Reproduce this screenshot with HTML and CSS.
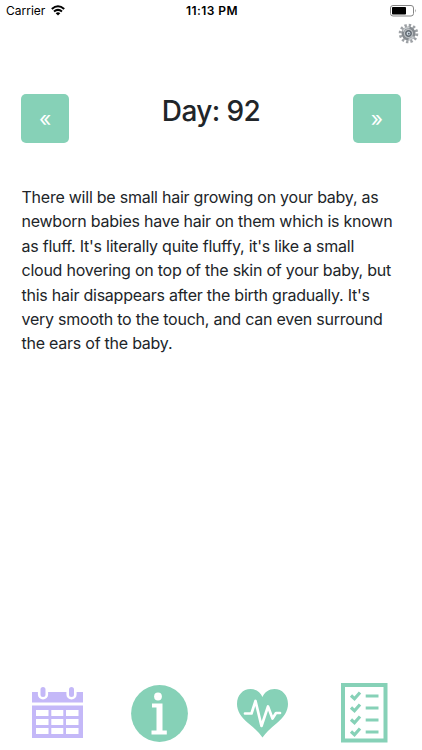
FILE: index.html
```html
<!DOCTYPE html>
<html lang="en">
<head>
<meta charset="utf-8">
<title>Day 92</title>
<link rel="stylesheet" href="styles.css">
</head>
<body>
<header class="status">
  <div class="carrier"><span>Carrier</span>
    <svg class="wifi" viewBox="0 0 14 11"><g fill="none" stroke="#000" stroke-width="2"><path d="M.8 4.1Q7-1.5 13.2 4.1M3 6.6Q7 3.1 11 6.6"/></g><path d="M4.7 8.2Q7 6.3 9.3 8.2L7 10.6z"/></svg>
  </div>
  <div class="time">11:13 PM</div>
  <svg class="battery" viewBox="0 0 26 12"><rect x=".5" y=".5" width="23" height="10.5" rx="2.5" fill="#fff" stroke="#858585"/><rect x="2" y="2" width="14" height="7.5" rx=".8"/><path d="M25 4q1.5 1.8 0 3.6z" fill="#858585"/></svg>
</header>
<div class="settings">
  <svg class="gear" viewBox="-10.5 -10.5 21 21">
    <circle r="8.300" fill="none" stroke="#9da1a5" stroke-width="3" stroke-dasharray="2.350 1.996"/>
    <circle r="5.800" fill="#bfc3c6" stroke="#868b90" stroke-width="2.400"/>
    <path d="M-5.500 -2A5.800 5.800 0 0 1 1-5.700M5 3A5.800 5.800 0 0 1 0 5.800" fill="none" stroke="#c9cdd0" stroke-width="1.500"/>
    <circle r="2.700" fill="#cbd5de" stroke="#626a72" stroke-width="1.500"/>
    <circle cx=".3" cy=".2" r=".9" fill="#59636c"/>
  </svg>
</div>
<main>
  <div class="day-nav">
    <button class="step">«</button>
    <h1>Day: 92</h1>
    <button class="step">»</button>
  </div>
  <p class="story">There will be small hair growing on your baby, as<br>newborn babies have hair on them which is known<br>as fluff. It's literally quite fluffy, it's like a small<br>cloud hovering on top of the skin of your baby, but<br>this hair disappears after the birth gradually. It's<br>very smooth to the touch, and can even surround<br>the ears of the baby.</p>
</main>
<nav class="tabs">
  <svg class="calendar" viewBox="0 0 51 51">
    <path fill="#c4b8f8" d="M0 5H51V15.500H0zM0 18.500H51V51H0z"/>
    <g fill="#c4b8f8" stroke="#fff" stroke-width="2.600"><rect x="7.200" y="-1.300" width="7.600" height="12.600" rx="3.800"/><rect x="35.700" y="-1.300" width="7.600" height="12.600" rx="3.800"/></g>
    <path fill="#fff" d="M4 23h12.500v6H4zM19.300 23h12v6h-12zM34 23h12.500v6H34zM4 32h12.500v6H4zM19.300 32h12v6h-12zM34 32h12.500v6H34zM4 41h12.500v6H4zM19.300 41h12v6h-12zM34 41h12.500v6H34z"/>
  </svg>
  <svg class="info" viewBox="0 0 57 57"><circle cx="28.500" cy="28.500" r="28.400" fill="#86d1b7"/><circle cx="27" cy="11.500" r="3.900" fill="#fff"/><path fill="#fff" d="M21 18.500H31.500V45.500H35.800V49.500H20.500V45.500H25.500V22.500H21z"/></svg>
  <svg class="heart" viewBox="0 0 51 49"><path fill="#86d1b7" d="M25.500 48.500Q21 42 11 34C4 28 0 22 0 15C0 6 6 0 13.500 0C19 0 23.500 3 25.500 8C27.500 3 32 0 37.500 0C45 0 51 6 51 15C51 22 47 28 40 34Q30 42 25.500 48.500z"/><path fill="none" stroke="#fff" stroke-width="2.700" stroke-linejoin="round" stroke-linecap="round" d="M8 24.500H14.500L18.500 12L24.500 37L31 17.500L35.500 29.500L39 24H43"/></svg>
  <svg class="list" viewBox="0 0 47 60"><path fill="#fff" stroke="#86d1b7" stroke-width="4" d="M2 2H44.500V57.500H2z"/><g fill="none" stroke="#86d1b7"><path stroke-width="3.200" d="M10 12.500l3.500 3.200L19 9.500M10 24.500l3.500 3.200L19 21.500M10 36.500l3.500 3.200L19 33.500M10 48.500l3.500 3.200L19 45.500"/><path stroke-width="2.800" d="M24.700 13H37.500M24.700 25H37.500M24.700 37H37.500M24.700 49H37.500"/></g></svg>
</nav>
</body>
</html>
```
FILE: styles.css
```css
* { box-sizing: border-box; }

body {
  margin: 0;
  height: 750px;
  overflow: hidden;
  display: flex;
  flex-direction: column;
  background: #fff;
  color: #212529;
  font-family: Inter, "Liberation Sans", sans-serif;
}

svg { display: block; flex: none; overflow: visible; }

.status {
  display: grid;
  grid-template-columns: 1fr auto 1fr;
  align-items: center;
  height: 21px;
  padding: 0 6px;
  color: #000;
  font-size: 12px;
}

.carrier { display: flex; align-items: center; gap: 6px; }
.wifi { width: 14px; height: 11px; }
.time { font-weight: 600; letter-spacing: .45px; padding-left: 2px; }
.battery { width: 26px; height: 12px; justify-self: end; }

.settings {
  display: flex;
  justify-content: flex-end;
  height: 73px;
  padding: 2px 3px 0 0;
}

.gear { width: 21px; height: 21px; }

main { padding: 0 21px; }

.day-nav {
  display: flex;
  justify-content: space-between;
  align-items: flex-start;
}

.step {
  width: 48px;
  height: 49px;
  padding: 0;
  border: 0;
  border-radius: 5px;
  background: #86d1b7;
  color: #fff;
  font: 21px Inter, sans-serif;
}

h1 {
  margin: 0;
  font-size: 28px;
  font-weight: 500;
  line-height: 34px;
  letter-spacing: -.6px;
}

.story {
  margin: 42px 0 0 .5px;
  font-size: 16px;
  line-height: 24.400px;
  letter-spacing: -.24px;
  white-space: nowrap;
}

.tabs {
  display: flex;
  align-items: center;
  height: 60px;
  margin-top: auto;
  margin-bottom: 7px;
  padding-left: 32px;
}

.calendar { width: 51px; height: 51px; margin-bottom: 1px; }
.info { width: 57px; height: 57px; margin-left: 48px; }
.heart { width: 51px; height: 49px; margin-left: 49px; }
.list { width: 47px; height: 60px; margin-left: 53px; }
```
